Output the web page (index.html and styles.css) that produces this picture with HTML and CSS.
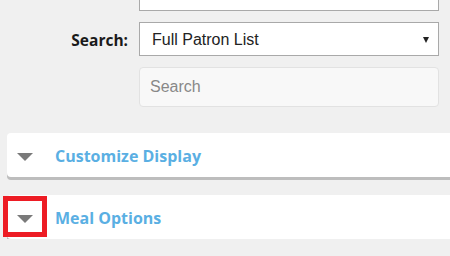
FILE: index.html
```html
<!DOCTYPE html>
<html lang="en">

<head>
    <meta charset="UTF-8" />
    <meta name="viewport" content="width=device-width, initial-scale=1" />
    <title>Patron Search</title>
    <link rel="stylesheet" href="styles.css">
</head>

<body>
    <div class="form">
        <div class="row">
            <div class="label"></div>
            <input class="field" type="text" />
        </div>
        <div class="row">
            <label class="label" for="search-type">Search:</label>
            <div class="select-wrap">
                <select class="field select" id="search-type">
                    <option>Full Patron List</option>
                </select>
            </div>
        </div>
        <div class="row">
            <div class="label"></div>
            <input class="field search" type="text" placeholder="Search" />
        </div>
    </div>

    <div class="panels">
        <div class="panel">
            <span class="toggle"></span>
            <span class="panel-title">Customize Display</span>
        </div>
        <div class="panel">
            <span class="toggle marked"></span>
            <span class="panel-title">Meal Options</span>
        </div>
    </div>
</body>

</html>
```

FILE: styles.css
```css
body {
    margin: 0;
    background: #f0f0f0;
    font-family: "Liberation Sans", Arial, sans-serif;
    overflow: hidden;
}

.form {
    display: flex;
    flex-direction: column;
    gap: 11px;
    margin-top: -23px;
}

.row {
    display: flex;
    align-items: center;
    gap: 11px;
}

.label {
    width: 128px;
    text-align: right;
    font-family: "Open Sans", sans-serif;
    font-weight: bold;
    font-size: 15.5px;
    line-height: 22px;
    padding-top: 1px;
    color: #1a1a1a;
}

.field {
    width: 300px;
    height: 34px;
    box-sizing: border-box;
    border: 1px solid #a9a9a9;
    background: #fff;
    margin: 0;
    font-family: "Liberation Sans", Arial, sans-serif;
    font-size: 16px;
    color: #222;
}

.select-wrap {
    position: relative;
}

.select {
    appearance: none;
    -webkit-appearance: none;
    border-radius: 0;
    padding: 0 12px;
}

.select-wrap::after {
    content: "";
    position: absolute;
    right: 10px;
    top: 15px;
    border-left: 3.5px solid transparent;
    border-right: 3.5px solid transparent;
    border-top: 6px solid #222;
}

.search {
    height: 40px;
    border: 1px solid #e2e2e2;
    border-radius: 4px;
    background: #f8f8f8;
    padding: 0 10px;
}

.search::placeholder {
    color: #888;
}

.panels {
    display: flex;
    flex-direction: column;
    gap: 18px;
    margin: 26px -10px 0 7px;
}

.panel {
    display: flex;
    align-items: flex-start;
    height: 44px;
    background: #fff;
    border-radius: 4px;
    box-shadow: 0 3px 0 #bdbdbd;
}

.toggle {
    position: relative;
    width: 17px;
    height: 8px;
    margin: 20px 21px 0 10px;
}

.toggle::before {
    content: "";
    position: absolute;
    left: 0;
    top: 0;
    border-left: 8.5px solid transparent;
    border-right: 8.5px solid transparent;
    border-top: 8px solid #7a7a7a;
}

.toggle.marked::after {
    content: "";
    position: absolute;
    left: -14px;
    top: -19px;
    width: 34px;
    height: 31px;
    border: 5px solid #ed1c24;
}

.panel-title {
    margin-top: 12px;
    font-family: "Open Sans", sans-serif;
    font-weight: bold;
    font-size: 16px;
    line-height: 22px;
    color: #5aafe3;
}
```
